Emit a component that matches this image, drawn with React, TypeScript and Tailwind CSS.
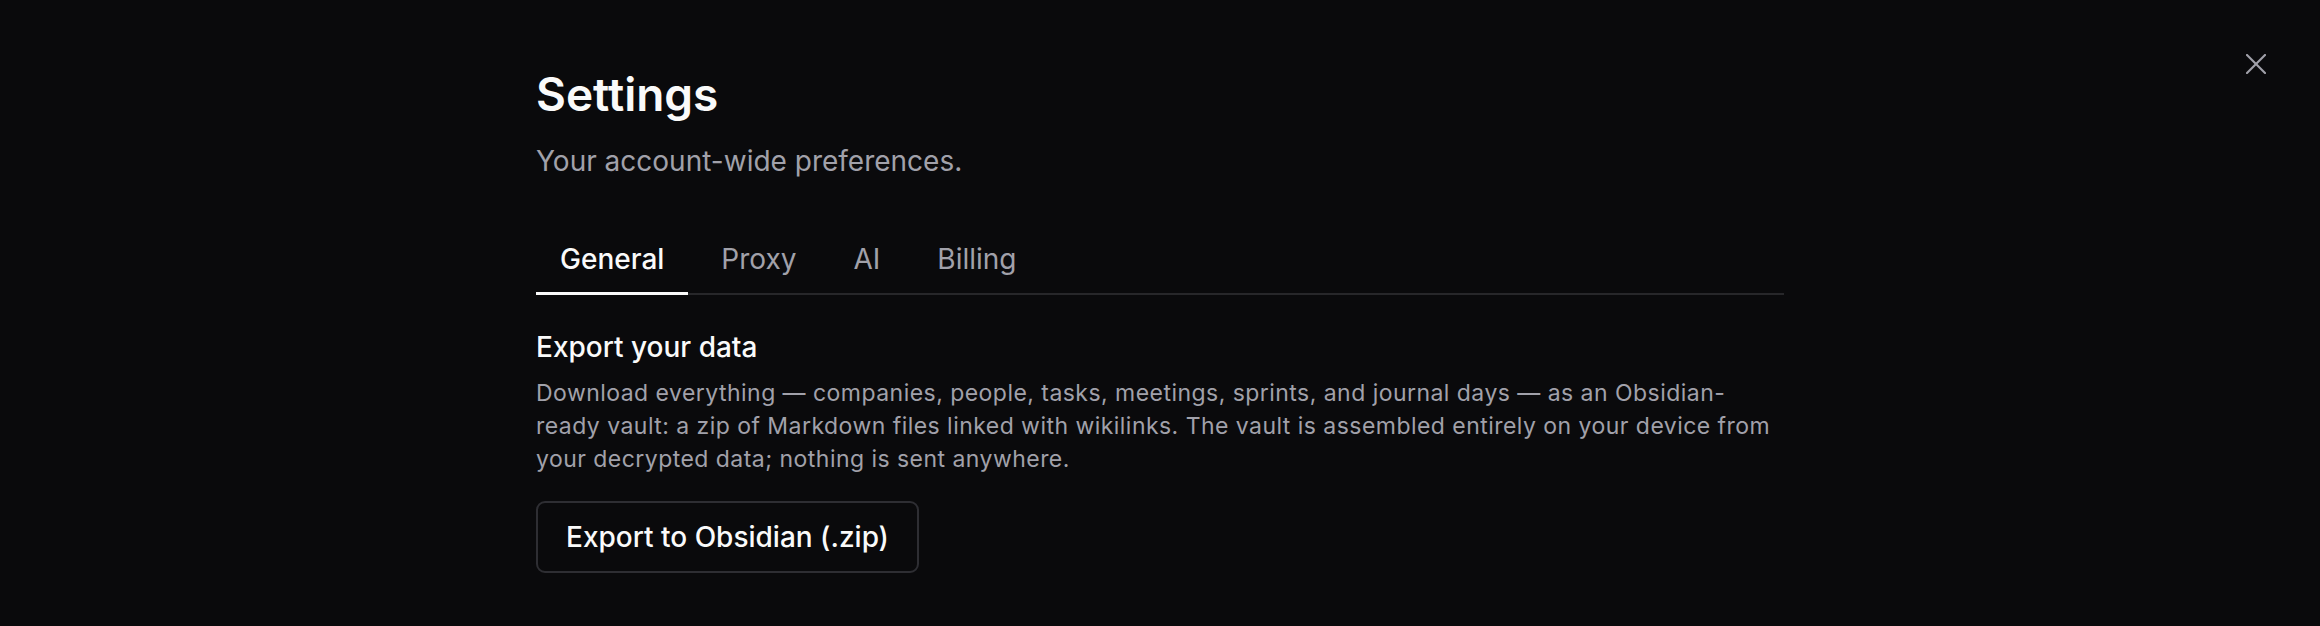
import { useState } from 'react';

const tabs = ['General', 'Proxy', 'AI', 'Billing'];

function CloseIcon() {
  return (
    <svg width="20" height="20" viewBox="0 0 20 20" fill="none" stroke="currentColor" strokeWidth="2.2" strokeLinecap="round">
      <path d="M1 1 L19 19" />
      <path d="M19 1 L1 19" />
    </svg>
  );
}

export default function App() {
  const [active, setActive] = useState('General');

  return (
    <div
      className="relative min-h-screen w-full bg-[#0a0a0c] text-[#fafafa]"
      style={{ fontFamily: 'Inter, "Noto Sans", sans-serif' }}
    >
      <button
        aria-label="Close"
        className="absolute top-[54px] right-[54px] flex h-[20px] w-[20px] items-center justify-center text-[#a1a1aa]"
      >
        <CloseIcon />
      </button>

      <div className="mx-auto w-[1248px] pt-[67px]">
        <h1 className="text-[46px] leading-[54px] font-semibold">Settings</h1>
        <p className="mt-[19px] text-[28px] leading-[42px] text-[#a1a1aa]">Your account-wide preferences.</p>

        {/* tabs */}
        <div className="mt-[44px] flex gap-[9px] border-b-2 border-[#27272a]" role="tablist">
          {tabs.map((t) => (
            <button
              key={t}
              role="tab"
              onClick={() => setActive(t)}
              className={
                active === t
                  ? '-mb-[2px] border-b-[3px] border-[#fafafa] px-[24px] pt-[12px] pb-[12px] text-[28px] leading-[42px] font-medium text-[#fafafa]'
                  : '-mb-[2px] border-b-[3px] border-transparent px-[24px] pt-[12px] pb-[12px] text-[28px] leading-[42px] text-[#a1a1aa]'
              }
            >
              {t}
            </button>
          ))}
        </div>

        <section>
          <h2 className="mt-[31px] text-[28px] leading-[42px] font-medium">Export your data</h2>
          <p className="mt-[9px] text-[23px] leading-[33px] tracking-[0.02em] text-[#a1a1aa]">
            Download everything — companies, people, tasks, meetings, sprints, and journal days — as an Obsidian-ready
            vault: a zip of Markdown files linked with wikilinks. The vault is assembled entirely on your device from
            your decrypted data; nothing is sent anywhere.
          </p>
          <button className="mt-[25px] h-[72px] rounded-[9px] border-2 border-[#2e2e33] px-[28px] text-[28px] leading-[42px] font-medium text-[#fafafa]">
            Export to Obsidian (.zip)
          </button>
        </section>
      </div>
    </div>
  );
}
